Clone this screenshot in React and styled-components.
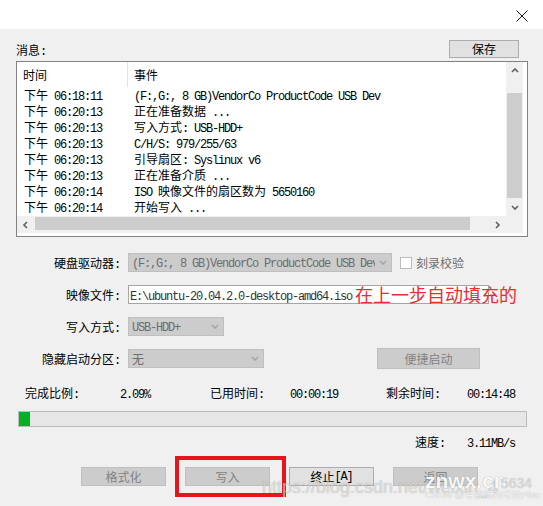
import React from "react";
import styled, { createGlobalStyle } from "styled-components";

const GlobalStyle = createGlobalStyle`
  html, body { margin: 0; padding: 0; }
  body {
    width: 543px; height: 506px; overflow: hidden;
    background: #f0f0f0;
    font-family: "Noto Sans CJK SC", "Liberation Sans", sans-serif;
    font-size: 12px; color: #000;
  }
`;

const Latin = styled.span`
  font-family: "Liberation Mono", "Noto Sans CJK SC", monospace;
  font-size: 12px;
  letter-spacing: -1.2px;
  white-space: pre;
`;

function T({ children }) {
  const parts = String(children).split(/([\u0000-\u024f]+)/).filter(Boolean);
  return parts.map((p, i) =>
    /[\u0000-\u024f]/.test(p[0]) ? <Latin key={i}>{p}</Latin> : <span key={i}>{p}</span>
  );
}

const Window = styled.div`
  position: relative;
  width: 543px; height: 506px;
  display: flex; flex-direction: column;
  background: #f0f0f0;
  overflow: hidden;
`;

const TitleBar = styled.div`
  height: 29px; flex: none;
  background: #fff;
  display: flex; justify-content: flex-end; align-items: flex-start;
  padding: 10px 15px 0 0;
  box-sizing: border-box;
`;

const Body = styled.div`
  display: flex; flex-direction: column;
  padding: 0 15px 0 16px;
`;

const TopRow = styled.div`
  margin-top: 11px; height: 18px;
  display: flex; justify-content: space-between; align-items: flex-end;
`;

const SectionLabel = styled.div`
  line-height: 16px; margin-bottom: -2px;
`;

const Button = styled.div`
  box-sizing: border-box;
  width: ${p => p.$w}px; height: ${p => p.$h || 19}px;
  display: flex; align-items: center; justify-content: center;
  background: ${p => (p.$disabled ? "#cccccc" : "#e1e1e1")};
  border: 1px solid ${p => (p.$disabled ? "#bfbfbf" : "#adadad")};
  color: ${p => (p.$disabled ? "#838383" : "#000")};
  font-size: 12px; line-height: 16px;
  margin-right: ${p => p.$mr || 0}px;
  margin-left: ${p => p.$ml || 0}px;
`;

const ListBox = styled.div`
  margin-top: 3px;
  height: 176px;
  box-sizing: border-box;
  border: 1px solid #828282;
  background: #fff;
  padding: 0 4px 3px 0;
  display: grid;
  grid-template-columns: 1fr 17px;
  grid-template-rows: 1fr 17px;
`;

const ListContent = styled.div`
  overflow: hidden;
  display: flex; flex-direction: column;
`;

const ListHeader = styled.div`
  height: 25px; flex: none;
  display: grid; grid-template-columns: 111px 1fr;
`;

const HeaderCell = styled.div`
  display: flex; align-items: center;
  padding-left: 6px;
  border-right: ${p => (p.$divider ? "1px solid #e5e5e5" : "none")};
`;

const ListRow = styled.div`
  height: 16px; flex: none;
  display: grid; grid-template-columns: 111px 1fr;
  line-height: 16px; white-space: nowrap;
`;

const Cell = styled.div`
  padding-left: ${p => p.$pl}px;
  overflow: hidden;
`;

const VScroll = styled.div`
  background: #f0f0f0;
  display: flex; flex-direction: column;
`;

const HScroll = styled.div`
  background: #f0f0f0;
  display: flex; flex-direction: row;
`;

const Corner = styled.div`
  background: #f0f0f0;
`;

const ArrowBox = styled.div`
  width: 17px; height: 17px; flex: none;
  display: flex; align-items: center; justify-content: center;
`;

const VTrack = styled.div` flex: 1; display: flex; flex-direction: column; `;
const HTrack = styled.div` flex: 1; display: flex; flex-direction: row; `;

const VThumb = styled.div`
  margin: 14px 1px 0 1px;
  height: 105px;
  background: #cdcdcd;
`;

const HThumb = styled.div`
  margin: 1px 0 3px 1px;
  width: 435px;
  background: #cdcdcd;
`;

const Chevron = ({ dir, color = "#606060" }) => {
  const paths = {
    up: "M1 5 L4 2 L7 5",
    down: "M1 2 L4 5 L7 2",
    left: "M5 1 L2 4 L5 7",
    right: "M2 1 L5 4 L2 7",
  };
  return (
    <svg width="8" height="8" viewBox="0 0 8 8">
      <path d={paths[dir]} fill="none" stroke={color} strokeWidth="1.6" />
    </svg>
  );
};

const Form = styled.div`
  margin-top: 16px;
  display: grid;
  grid-template-columns: 104px 1fr;
  grid-auto-rows: 19px;
  column-gap: 8px;
  row-gap: 13px;
`;

const FormLabel = styled.div`
  text-align: right;
  line-height: 19px;
  white-space: nowrap;
`;

const FormControls = styled.div`
  position: relative;
  display: flex; align-items: center;
`;

const Select = styled.div`
  box-sizing: border-box;
  width: ${p => p.$w}px; height: 19px; flex: none;
  background: #cccccc;
  border: 1px solid #bfbfbf;
  color: #6d6d6d;
  display: flex; align-items: center;
`;

const SelectText = styled.div`
  flex: 1; overflow: hidden; white-space: nowrap;
  padding-left: 3px;
  line-height: 17px;
`;

const SelectArrow = styled.div`
  width: 16px; flex: none;
  display: flex; align-items: center; justify-content: center;
`;

const CheckBox = styled.div`
  box-sizing: border-box;
  width: 12px; height: 12px; flex: none;
  margin-left: 8px;
  background: #fff;
  border: 1px solid #bcbcbc;
`;

const CheckLabel = styled.div`
  margin-left: 4px;
  color: #6d6d6d;
  line-height: 16px;
`;

const Input = styled.div`
  box-sizing: border-box;
  width: ${p => p.$w}px; height: 19px;
  background: #fff;
  border: 1px solid #a5a5a5;
  color: #333;
  padding-left: 1px;
  line-height: 17px;
  white-space: nowrap; overflow: hidden;
`;

const Annotation = styled.div`
  position: absolute;
  left: 227px; top: -2px;
  font-size: 18px; line-height: 22px;
  color: #ec2b2e;
  white-space: nowrap;
`;

const StatsRow = styled.div`
  margin-top: 17px;
  padding-left: 9px;
  display: grid;
  grid-template-columns: 95px 90px 80px 96px 81px auto;
  line-height: 16px;
  white-space: nowrap;
`;

const Progress = styled.div`
  margin: 8px 1px 0 2px;
  height: 16px;
  box-sizing: border-box;
  border: 1px solid #bcbcbc;
  background: #e6e6e6;
  display: flex;
`;

const ProgressFill = styled.div`
  background: #06b025;
`;

const SpeedRow = styled.div`
  margin-top: 7px;
  padding-left: 399px;
  display: grid;
  grid-template-columns: 52px auto;
  line-height: 16px;
  white-space: nowrap;
`;

const ButtonRow = styled.div`
  margin-top: 15px;
  padding-left: 65px;
  display: flex;
  gap: 19px;
`;

const Highlight = styled.div`
  position: relative;
  &::after {
    content: "";
    position: absolute;
    left: -10px; top: -11px;
    width: 111px; height: 41px;
    box-sizing: border-box;
    border: 4px solid #e8141c;
  }
`;

const Watermark = styled.div`
  position: absolute;
  left: ${p => p.$x}px; top: ${p => p.$y}px;
  font-family: ${p => (p.$bold ? '"Liberation Sans", sans-serif' : '"Liberation Sans", "Noto Sans CJK SC", sans-serif')};
  font-size: ${p => p.$size}px;
  font-weight: ${p => (p.$bold ? 700 : 400)};
  color: rgba(255, 255, 255, ${p => p.$alpha || 0.8});
  text-shadow: 0 0 1px rgba(0, 0, 0, 0.35);
  white-space: nowrap;
  line-height: 1;
`;

const rows = [
  ["下午 06:18:11", "(F:,G:, 8 GB)VendorCo ProductCode USB Dev"],
  ["下午 06:20:13", "正在准备数据 ..."],
  ["下午 06:20:13", "写入方式: USB-HDD+"],
  ["下午 06:20:13", "C/H/S: 979/255/63"],
  ["下午 06:20:13", "引导扇区: Syslinux v6"],
  ["下午 06:20:13", "正在准备介质 ..."],
  ["下午 06:20:14", "ISO 映像文件的扇区数为 5650160"],
  ["下午 06:20:14", "开始写入 ..."],
];

const progress = 2.09;

export default function App() {
  return (
    <>
      <GlobalStyle />
      <Window>
        <TitleBar>
          <svg width="12" height="12" viewBox="0 0 12 12">
            <path d="M0.5 0.5 L11.5 11.5 M11.5 0.5 L0.5 11.5" stroke="#111" strokeWidth="1" fill="none" />
          </svg>
        </TitleBar>
        <Body>
          <TopRow>
            <SectionLabel><T>消息:</T></SectionLabel>
            <Button $w={70} $h={18} $mr={9}>保存</Button>
          </TopRow>
          <ListBox>
            <ListContent>
              <ListHeader>
                <HeaderCell $divider>时间</HeaderCell>
                <HeaderCell>事件</HeaderCell>
              </ListHeader>
              {rows.map((r, i) => (
                <ListRow key={i}>
                  <Cell $pl={7}><T>{r[0]}</T></Cell>
                  <Cell $pl={6}><T>{r[1]}</T></Cell>
                </ListRow>
              ))}
            </ListContent>
            <VScroll>
              <ArrowBox><Chevron dir="up" /></ArrowBox>
              <VTrack><VThumb /></VTrack>
              <ArrowBox><Chevron dir="down" /></ArrowBox>
            </VScroll>
            <HScroll>
              <ArrowBox><Chevron dir="left" /></ArrowBox>
              <HTrack><HThumb /></HTrack>
              <ArrowBox><Chevron dir="right" /></ArrowBox>
            </HScroll>
            <Corner />
          </ListBox>

          <Form>
            <FormLabel><T>硬盘驱动器:</T></FormLabel>
            <FormControls>
              <Select $w={264}>
                <SelectText><T>(F:,G:, 8 GB)VendorCo ProductCode USB Dev</T></SelectText>
                <SelectArrow><Chevron dir="down" color="#a8a8a8" /></SelectArrow>
              </Select>
              <CheckBox />
              <CheckLabel>刻录校验</CheckLabel>
            </FormControls>

            <FormLabel><T>映像文件:</T></FormLabel>
            <FormControls>
              <Input $w={361}><T>E:\ubuntu-20.04.2.0-desktop-amd64.iso</T></Input>
              <Annotation>在上一步自动填充的</Annotation>
            </FormControls>

            <FormLabel><T>写入方式:</T></FormLabel>
            <FormControls>
              <Select $w={96}>
                <SelectText><T>USB-HDD+</T></SelectText>
                <SelectArrow><Chevron dir="down" color="#a8a8a8" /></SelectArrow>
              </Select>
            </FormControls>

            <FormLabel><T>隐藏启动分区:</T></FormLabel>
            <FormControls>
              <Select $w={136}>
                <SelectText>无</SelectText>
                <SelectArrow><Chevron dir="down" color="#a8a8a8" /></SelectArrow>
              </Select>
              <Button $w={103} $h={21} $ml={113} $disabled>便捷启动</Button>
            </FormControls>
          </Form>

          <StatsRow>
            <div><T>完成比例:</T></div>
            <div><T>2.09%</T></div>
            <div><T>已用时间:</T></div>
            <div><T>00:00:19</T></div>
            <div><T>剩余时间:</T></div>
            <div><T>00:14:48</T></div>
          </StatsRow>

          <Progress>
            <ProgressFill style={{ width: `${progress}%` }} />
          </Progress>

          <SpeedRow>
            <div><T>速度:</T></div>
            <div><T>3.11MB/s</T></div>
          </SpeedRow>

          <ButtonRow>
            <Button $w={85} $disabled>格式化</Button>
            <Highlight>
              <Button $w={85} $disabled>写入</Button>
            </Highlight>
            <Button $w={85}><T>终止[A]</T></Button>
            <Button $w={85} $disabled>返回</Button>
          </ButtonRow>
        </Body>

        <Watermark $x={262} $y={478} $size={18} $alpha={0.6}>https://blog.csdn.net/weixin_4</Watermark>
        <Watermark $x={425} $y={470} $size={21} $bold $alpha={0.95}>znwx.cn</Watermark>
        <Watermark $x={501} $y={476} $size={14} $alpha={0.55}>5634</Watermark>
        <Watermark $x={425} $y={490} $size={9.5} $alpha={0.9}>CSDN @寻找简的考拉Plus</Watermark>
      </Window>
    </>
  );
}
